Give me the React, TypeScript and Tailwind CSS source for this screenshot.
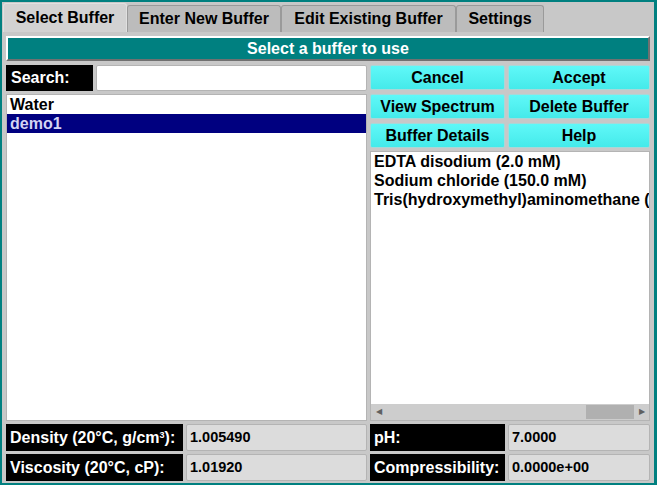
import React from "react"

const TABS = ["Select Buffer", "Enter New Buffer", "Edit Existing Buffer", "Settings"]
const TAB_W = ["w-[124px]", "w-[154px]", "w-[175px]", "w-[88px]"]

const COMPONENTS = [
  "EDTA disodium (2.0 mM)",
  "Sodium chloride (150.0 mM)",
  "Tris(hydroxymethyl)aminomethane (150.0 mM)",
]

const Btn = ({ label }: { label: string }) => (
  <button className="h-[25px] rounded-[2px] border border-[#a8d8d8] bg-gradient-to-b from-[#5ff8f8] to-[#44eaea] text-[16px] font-bold text-black leading-none">
    {label}
  </button>
)

const Field = ({ label, value, labelW }: { label: React.ReactNode; value: string; labelW: string }) => (
  <div className="flex h-[27px] gap-[3px]">
    <div className={`${labelW} flex items-center whitespace-nowrap bg-black pl-[4px] text-[16px] font-bold text-white`}>
      {label}
    </div>
    <div className="flex flex-1 items-center rounded-[2px] border border-[#b4b4b4] bg-[#dcdcdc] pl-[3px] text-[14.5px] font-bold text-black">
      {value}
    </div>
  </div>
)

export default function App() {
  return (
    <div
      className="h-[485px] w-[657px] bg-[#008080] pb-[2px] pl-[2px] pr-[3px] pt-[2px]"
      style={{ fontFamily: '"Liberation Sans", Arial, sans-serif' }}
    >
      <div className="flex h-full flex-col bg-[#c8c8c8]">
        {/* tabs */}
        <div className="flex h-[30px] items-end pl-[1px]">
          {TABS.map((t, i) => (
            <div
              key={t}
              className={`${TAB_W[i]} flex items-center justify-center rounded-t-[3px] border border-b-0 text-[16px] font-bold text-black ${
                i === 0
                  ? "h-[29px] border-[#e0e0e0] bg-[#d2d2d2]"
                  : "h-[27px] border-[#9a9a9a] bg-[#bcbcbc]"
              }`}
            >
              {t}
            </div>
          ))}
        </div>

        <div className="flex flex-1 flex-col gap-[4px] px-[4px] pb-[2px] pt-[4px]">
          <div className="flex h-[25px] items-center justify-center border-2 border-b-[#707070] border-l-white border-r-[#707070] border-t-white bg-[#008080] text-[16px] font-bold text-white">
            Select a buffer to use
          </div>

          <div className="grid flex-1 grid-cols-[361px_280px] gap-x-[3px]">
            {/* left column */}
            <div className="flex flex-col gap-[3px]">
              <div className="flex h-[26px] gap-[3px]">
                <div className="flex w-[87px] items-center bg-black pl-[5px] text-[16px] font-bold text-white">
                  Search:
                </div>
                <div className="flex-1 rounded-[2px] border border-[#b4b4b4] bg-white" />
              </div>
              <div className="flex flex-1 flex-col border border-[#b4b4b4] bg-white pt-[1px]">
                <div className="flex h-[18px] items-center pl-[3px] text-[16px] font-bold text-black">Water</div>
                <div className="flex h-[19px] items-center bg-[#000080] pl-[3px] text-[16px] font-bold text-[#d4d4f4]">
                  demo1
                </div>
              </div>
              <Field
                labelW="w-[177px]"
                label={
                  <span>
                    Density (20°C, g/cm<sup className="text-[9px]">3</sup>):
                  </span>
                }
                value="1.005490"
              />
              <Field labelW="w-[177px]" label="Viscosity (20°C, cP):" value="1.01920" />
            </div>

            {/* right column */}
            <div className="flex flex-col gap-[3px]">
              <div className="grid grid-cols-[135px_142px] gap-x-[3px] gap-y-[4px]">
                <Btn label="Cancel" />
                <Btn label="Accept" />
                <Btn label="View Spectrum" />
                <Btn label="Delete Buffer" />
                <Btn label="Buffer Details" />
                <Btn label="Help" />
              </div>
              <div className="flex flex-1 flex-col overflow-hidden border border-[#b4b4b4] bg-white">
                <div className="flex-1 overflow-hidden pl-[3px]">
                  {COMPONENTS.map((c) => (
                    <div key={c} className="h-[19px] whitespace-nowrap text-[16px] font-bold leading-[19px] text-black">
                      {c}
                    </div>
                  ))}
                </div>
                <div className="flex h-[16px] items-stretch bg-[#cdcdcd]">
                  <div className="flex w-[15px] items-center justify-center text-[8px] text-[#606060]">◀</div>
                  <div className="relative flex-1">
                    <div className="absolute bottom-[1px] right-0 top-[1px] w-[48px] bg-[#b0b0b0]" />
                  </div>
                  <div className="flex w-[15px] items-center justify-center text-[8px] text-[#606060]">▶</div>
                </div>
              </div>
              <Field labelW="w-[135px]" label="pH:" value="7.0000" />
              <Field labelW="w-[135px]" label="Compressibility:" value="0.0000e+00" />
            </div>
          </div>
        </div>
      </div>
    </div>
  )
}
